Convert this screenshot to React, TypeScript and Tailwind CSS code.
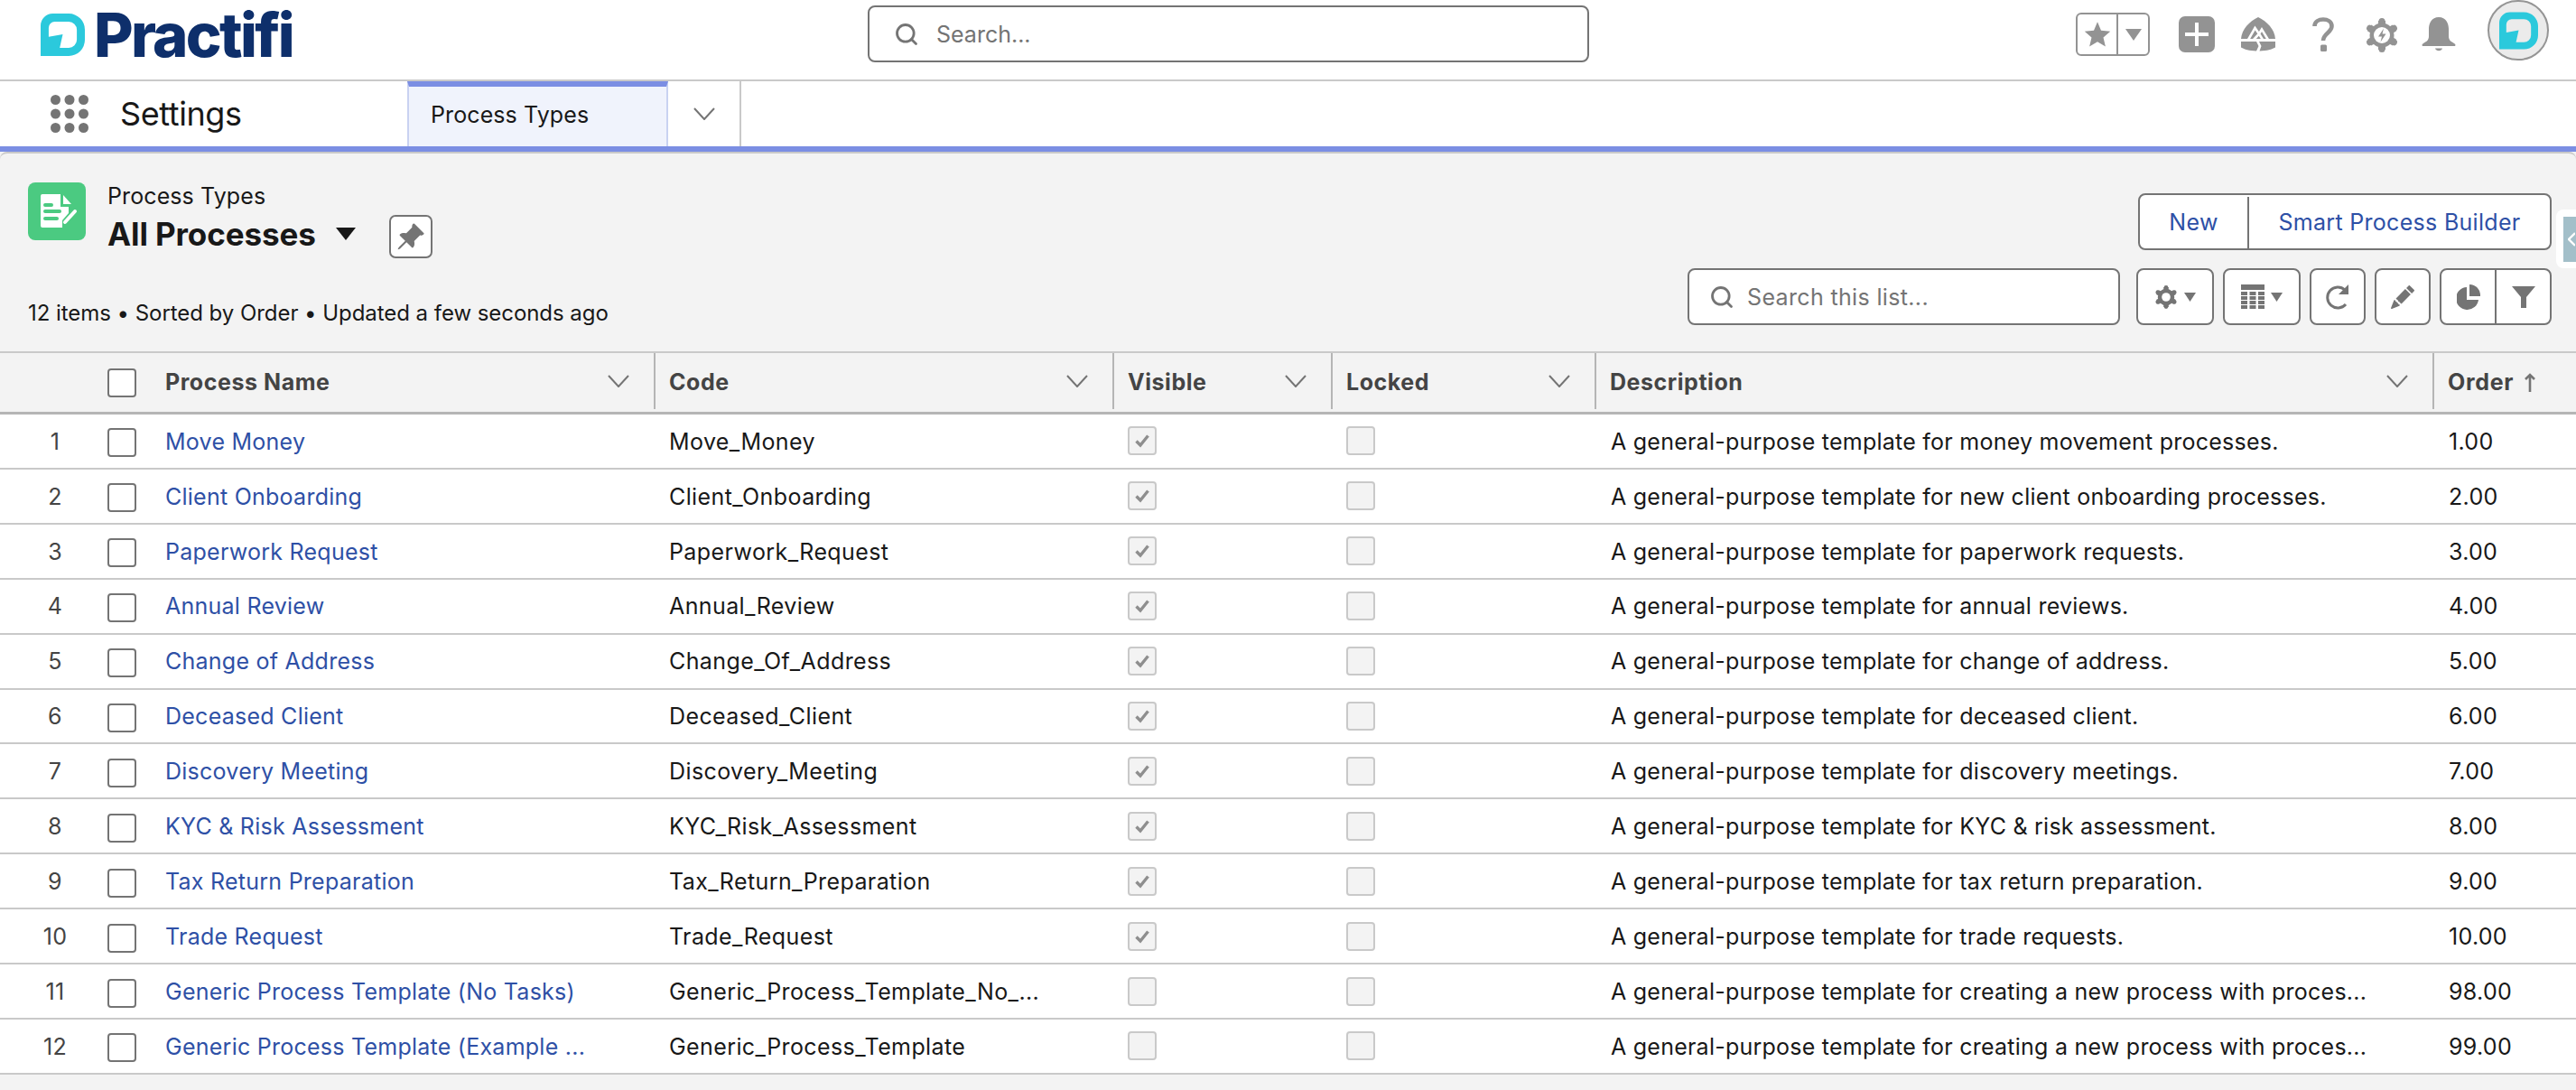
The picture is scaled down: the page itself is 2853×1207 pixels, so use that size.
import { Search } from 'lucide-react'
import { BsPinAngleFill, BsPencilFill } from 'react-icons/bs'

const rows = [
  ['Move Money', 'Move_Money', true, 'A general-purpose template for money movement processes.', '1.00'],
  ['Client Onboarding', 'Client_Onboarding', true, 'A general-purpose template for new client onboarding processes.', '2.00'],
  ['Paperwork Request', 'Paperwork_Request', true, 'A general-purpose template for paperwork requests.', '3.00'],
  ['Annual Review', 'Annual_Review', true, 'A general-purpose template for annual reviews.', '4.00'],
  ['Change of Address', 'Change_Of_Address', true, 'A general-purpose template for change of address.', '5.00'],
  ['Deceased Client', 'Deceased_Client', true, 'A general-purpose template for deceased client.', '6.00'],
  ['Discovery Meeting', 'Discovery_Meeting', true, 'A general-purpose template for discovery meetings.', '7.00'],
  ['KYC & Risk Assessment', 'KYC_Risk_Assessment', true, 'A general-purpose template for KYC & risk assessment.', '8.00'],
  ['Tax Return Preparation', 'Tax_Return_Preparation', true, 'A general-purpose template for tax return preparation.', '9.00'],
  ['Trade Request', 'Trade_Request', true, 'A general-purpose template for trade requests.', '10.00'],
  ['Generic Process Template (No Tasks)', 'Generic_Process_Template_No_...', false, 'A general-purpose template for creating a new process with proces...', '98.00'],
  ['Generic Process Template (Example ...', 'Generic_Process_Template', false, 'A general-purpose template for creating a new process with proces...', '99.00'],
] as const

const gridCols = 'grid grid-cols-[119px_64px_541px_508px_242px_292px_928px_1fr]'

function Chevron({ className = '' }: { className?: string }) {
  return (
    <svg width="24" height="14" viewBox="0 0 24 14" className={className}>
      <path d="M1 1 L12 13 L23 1" fill="none" stroke="#747474" strokeWidth="2" />
    </svg>
  )
}

function LogoMark({ size, height }: { size: number; height: number }) {
  return (
    <svg width={size} height={height} viewBox="0 0 44 42">
      <path
        fillRule="evenodd"
        fill="#2bc9dc"
        d="M0 42 V12 A12 12 0 0 1 12 0 H28 A16 16 0 0 1 44 16 V26 A16 16 0 0 1 28 42 Z M8 23 V14 A6 6 0 0 1 14 8 H28 A8 8 0 0 1 36 16 V26 A8 8 0 0 1 28 34 H19 L22 20.5 Z"
      />
    </svg>
  )
}

function Gear({ size, bolt = false, fill = '#939393' }: { size: number; bolt?: boolean; fill?: string }) {
  const lobes = [0, 60, 120, 180, 240, 300]
  return (
    <svg width={size} height={size} viewBox="0 0 38 38">
      {lobes.map((a) => (
        <circle key={a} cx="19" cy="3.5" r="3.5" fill={fill} transform={`rotate(${a + 0} 19 19)`} />
      ))}
      {lobes.map((a) => (
        <rect key={a} x="15" y="3" width="8" height="8" fill={fill} transform={`rotate(${a} 19 19)`} />
      ))}
      <circle cx="19" cy="19" r="13.5" fill={fill} />
      <circle cx="19" cy="19" r={bolt ? 9 : 7} fill="#fff" />
      {bolt && <path d="M21 11.5 L15 20.5 H19 L17.5 26.5 L23.5 17.5 H19.5 Z" fill={fill} />}
    </svg>
  )
}

function Checkbox() {
  return <div className="h-[32px] w-[32px] rounded-[4px] border-2 border-[#747474] bg-white" />
}

function ReadOnlyCheck({ checked }: { checked: boolean }) {
  return (
    <div className="flex h-[32px] w-[32px] items-center justify-center rounded-[4px] border-2 border-[#c9c9c9] bg-[#f3f3f3]">
      {checked && (
        <svg width="18" height="18" viewBox="0 0 18 18">
          <path d="M2.5 9.5 L7 14 L15.5 3.5" fill="none" stroke="#8e8e8e" strokeWidth="3.4" />
        </svg>
      )}
    </div>
  )
}

function HeaderCell({ label, first = false }: { label: string; first?: boolean }) {
  return (
    <div className={`mb-[3px] flex items-center justify-between pr-[27px] text-[25px] font-bold tracking-[0.55px] text-[#444] ${first ? '' : 'border-l-2 border-[#b5b5b5] pl-[15px]'}`}>
      <span className="pt-[3px]">{label}</span>
      <Chevron />
    </div>
  )
}

function ToolButton({ w, children }: { w: string; children: React.ReactNode }) {
  return (
    <div className={`flex h-[63px] ${w} items-center justify-center rounded-[8px] border-2 border-[#747474] bg-white`}>
      {children}
    </div>
  )
}

function SmallCaret() {
  return (
    <svg width="13" height="10" viewBox="0 0 13 10" className="ml-[7px]">
      <path d="M0 0 H13 L6.5 10 Z" fill="#747474" />
    </svg>
  )
}

export default function App() {
  return (
    <div className="h-[1207px] w-[2853px] overflow-hidden bg-[#f3f3f3] font-['Inter',sans-serif] text-[24px] text-[#181818]">
      {/* Global header */}
      <div className="flex h-[90px] items-start border-b-2 border-[#c9c9c9] bg-white">
        <div className="ml-[45px] mt-[14px] flex w-[916px] items-start">
          <LogoMark size={49} height={49} />
          <span className="ml-[10px] mt-[-8px] text-[67px] font-extrabold leading-[66px] tracking-[-2.7px] text-[#0e2f6b]">Practifi</span>
        </div>
        <div className="mt-[6px] flex h-[63px] w-[799px] items-center rounded-[8px] border-2 border-[#747474] bg-white pl-[27px]">
          <Search size={28} color="#747474" strokeWidth={2.4} />
          <span className="ml-[19px] pt-[2px] text-[25px] text-[#747474]">Search...</span>
        </div>
        <div className="ml-[539px] mt-[14px] flex h-[48px] w-[82px] rounded-[6px] border-2 border-[#939393]">
          <div className="flex w-[45px] items-center justify-center border-r-2 border-[#939393]">
            <svg width="30" height="30" viewBox="0 0 24 24">
              <path d="M12 1 L15.2 8.6 L23.4 9.3 L17.2 14.7 L19.1 22.8 L12 18.5 L4.9 22.8 L6.8 14.7 L0.6 9.3 L8.8 8.6 Z" fill="#939393" />
            </svg>
          </div>
          <div className="flex flex-1 items-center justify-center">
            <svg width="18" height="13" viewBox="0 0 18 13">
              <path d="M0 0 H18 L9 13 Z" fill="#939393" />
            </svg>
          </div>
        </div>
        <div className="ml-[32px] mt-[18px] flex h-[40px] w-[40px] items-center justify-center rounded-[7px] bg-[#939393]">
          <svg width="28" height="28" viewBox="0 0 28 28">
            <path d="M14 1 V27 M1 14 H27" stroke="#fff" strokeWidth="4" />
          </svg>
        </div>
        <svg width="38" height="38" viewBox="0 0 38 38" className="ml-[29px] mt-[19px]">
          <path d="M0 24 C1 13 9 5 19 0 C29 5 37 13 38 24 Z" fill="#939393" />
          <path d="M0 27 H17 L19.5 32 L17 37.5 C9 37 4 36 0 33.5 Z M38 27 H20 L22.5 32 L20.5 37.5 C29 37 34 36 38 33.5 Z" fill="#939393" />
          <path d="M8 25 L15.5 12 L20 18.5 L23 13.5 L30 25 M14 25 L20 18.5 L24 25" fill="none" stroke="#fff" strokeWidth="2.6" />
        </svg>
        <svg width="24" height="38" viewBox="0 0 24 38" className="ml-[41px] mt-[19px]">
          <path d="M2.5 10 C2.5 0 21.5 0 21.5 10 C21.5 17 12 18 12 26" fill="none" stroke="#939393" strokeWidth="4.6" />
          <rect x="9" y="30.5" width="7" height="7.5" rx="1.5" fill="#939393" />
        </svg>
        <div className="ml-[34px] mt-[20px]">
          <Gear size={38} bolt />
        </div>
        <svg width="38" height="38" viewBox="0 0 38 38" className="ml-[25px] mt-[19px]">
          <path d="M19 0 C27 0 30 7 30 13 V21 C30 26 33 27 36 29 C38 30 38 32 36 32 H2 C0 32 0 30 2 29 C5 27 8 26 8 21 V13 C8 7 11 0 19 0 Z" fill="#939393" />
          <path d="M15 34.5 H23 C22 38 16 38 15 34.5 Z" fill="#939393" />
        </svg>
        <div className="ml-[35px] flex h-[67px] w-[68px] shrink-0 items-center justify-center rounded-full border-2 border-[#959595] bg-[#ebebeb]">
          <LogoMark size={43} height={42} />
        </div>
      </div>

      {/* App nav */}
      <div className="flex h-[78px] border-b-[6px] border-[#7b8ee3] bg-white">
        <div className="flex w-[451px] items-center">
          <svg width="42" height="42" viewBox="0 0 42 42" className="ml-[56px]">
            {[5.5, 21, 36.5].map((cy) =>
              [5.5, 21, 36.5].map((cx) => <circle key={`${cx}-${cy}`} cx={cx} cy={cy} r="5.5" fill="#747474" />),
            )}
          </svg>
          <span className="ml-[35px] text-[36px] tracking-[-0.4px]">Settings</span>
        </div>
        <div className="flex w-[289px] items-center border-x-2 border-t-[6px] border-x-[#c9d2f1] border-t-[#7b8ee3] bg-[#f0f3fc] pl-[24px] pb-[2px] text-[25px] tracking-[0.1px]">
          Process Types
        </div>
        <div className="flex w-[81px] items-center justify-center border-r-2 border-[#c9c9c9]">
          <Chevron />
        </div>
      </div>

      {/* List header */}
      <div className="relative flex h-[223px] justify-between rounded-t-[8px] border-y-2 border-[#c9c9c9] bg-[#f3f3f3]">
        <div className="pl-[31px] pt-[32px]">
          <div className="flex items-start">
            <div className="h-[64px] w-[64px] rounded-[8px] bg-[#4bca81]">
              <svg width="64" height="64" viewBox="0 0 64 64">
                <path d="M16 13 H36 V27 H45 V34 L38 42 V50 H16 A2 2 0 0 1 14 48 V15 A2 2 0 0 1 16 13 Z" fill="#fff" />
                <path d="M39 14 L48 24 H39 Z" fill="#fff" />
                <path d="M19 25 H26 M19 32 H35 M19 40 H32" stroke="#4bca81" strokeWidth="4" strokeLinecap="round" />
                <path d="M41 44 L52 32" stroke="#fff" strokeWidth="4" strokeLinecap="round" />
              </svg>
            </div>
            <div className="ml-[24px]">
              <div className="text-[25px] leading-[30px] tracking-[0.1px]">Process Types</div>
              <div className="mt-[3px] flex items-start">
                <span className="text-[35px] font-bold leading-[48px] tracking-[-0.1px]">All Processes</span>
                <svg width="22" height="14" viewBox="0 0 22 14" className="ml-[22px] mt-[17px]">
                  <path d="M0 0 H22 L11 14 Z" fill="#181818" />
                </svg>
                <div className="ml-[37px] mt-[3px] flex h-[48px] w-[48px] items-center justify-center rounded-[7px] border-2 border-[#747474] bg-white">
                  <BsPinAngleFill size={33} color="#747474" />
                </div>
              </div>
            </div>
          </div>
          <div className="mt-[46px] leading-[30px] tracking-[-0.05px]">12 items • Sorted by Order • Updated a few seconds ago</div>
        </div>

        <div className="flex flex-col items-end pr-[27px] pt-[44px]">
          <div className="flex h-[63px] w-[458px] rounded-[8px] border-2 border-[#747474] bg-white pt-[2px] text-[25px] tracking-[0.3px] text-[#2e50a6]">
            <div className="flex w-[121px] items-center justify-center border-r-2 border-[#747474]">New</div>
            <div className="flex flex-1 items-center justify-center">Smart Process Builder</div>
          </div>
          <div className="mt-[20px] flex">
            <div className="flex h-[63px] w-[479px] items-center rounded-[8px] border-2 border-[#747474] bg-white pl-[22px]">
              <Search size={28} color="#747474" strokeWidth={2.4} />
              <span className="ml-[14px] pt-[2px] text-[25px] tracking-[0.35px] text-[#747474]">Search this list...</span>
            </div>
            <div className="ml-[18px] flex gap-[10px]">
              <ToolButton w="w-[86px]">
                <Gear size={26} fill="#747474" />
                <SmallCaret />
              </ToolButton>
              <ToolButton w="w-[86px]">
                <svg width="26" height="28" viewBox="0 0 26 28">
                  <rect width="26" height="6" fill="#747474" />
                  {[8, 13, 18, 23].map((y) =>
                    [0, 9.5, 19].map((x) => <rect key={`${x}-${y}`} x={x} y={y} width="7" height="4" fill="#747474" />),
                  )}
                </svg>
                <SmallCaret />
              </ToolButton>
              <ToolButton w="w-[62px]">
                <svg width="26" height="28" viewBox="0 0 26 28">
                  <path d="M22 22 A11.5 11.5 0 1 1 21 6" fill="none" stroke="#747474" strokeWidth="3" />
                  <path d="M25 0 V11 H14 Z" fill="#747474" />
                </svg>
              </ToolButton>
              <ToolButton w="w-[62px]">
                <BsPencilFill size={26} color="#747474" />
              </ToolButton>
              <div className="flex h-[63px] w-[124px] rounded-[8px] border-2 border-[#747474] bg-white">
                <div className="flex w-[61px] items-center justify-center border-r-2 border-[#747474]">
                  <svg width="26" height="28" viewBox="0 0 26 28">
                    <path d="M11 3 A12.5 12.5 0 1 0 24 17 H11 Z" fill="#747474" />
                    <path d="M14 0 A12 12 0 0 1 26 13 H14 Z" fill="#747474" />
                  </svg>
                </div>
                <div className="flex flex-1 items-center justify-center">
                  <svg width="26" height="24" viewBox="0 0 26 24">
                    <path d="M0 0 H26 L16 12 V24 H10 V12 Z" fill="#747474" />
                  </svg>
                </div>
              </div>
            </div>
          </div>
        </div>

        {/* Utility panel handle */}
        <div className="absolute right-0 top-[62px] flex h-[65px] w-[22px] items-center rounded-l-[8px] bg-white pl-[8px]">
          <div className="flex h-[50px] w-full items-center bg-[#a3bfc9]">
            <svg width="8" height="16" viewBox="0 0 8 16" className="ml-[5px]">
              <path d="M8 1 L1 8 L8 15" fill="none" stroke="#fff" strokeWidth="2.4" />
            </svg>
          </div>
        </div>
      </div>

      {/* Table header */}
      <div className={`${gridCols} h-[68px] border-b-[3px] border-[#b5b5b5] bg-[#f3f3f3]`}>
        <div />
        <div className="flex items-center">
          <Checkbox />
        </div>
        <HeaderCell label="Process Name" first />
        <HeaderCell label="Code" />
        <HeaderCell label="Visible" />
        <HeaderCell label="Locked" />
        <HeaderCell label="Description" />
        <div className="mb-[3px] flex items-center border-l-2 border-[#b5b5b5] pl-[15px] text-[25px] font-bold tracking-[0.7px] text-[#444]">
          <span className="pt-[3px]">Order</span>
          <svg width="16" height="22" viewBox="0 0 16 22" className="ml-[10px] mt-[3px]">
            <path d="M8 21 V2 M3 7 L8 2 L13 7" fill="none" stroke="#747474" strokeWidth="2.6" />
          </svg>
        </div>
      </div>

      {/* Rows */}
      {rows.map(([name, code, visible, desc, order], i) => (
        <div key={name} className={`${gridCols} h-[60.92px] items-center border-b-2 border-[#c9c9c9] bg-white text-[25px] tracking-[0.3px]`}>
          <div className="pl-[3px] pt-[2px] text-center text-[#444]">{i + 1}</div>
          <div className="pt-[4px]">
            <Checkbox />
          </div>
          <div className="pt-[2px] tracking-[0.25px] text-[#2e50a6]">{name}</div>
          <div className="pl-[17px] pt-[2px] tracking-[0.4px]">{code}</div>
          <div className="pl-[17px]">
            <ReadOnlyCheck checked={visible} />
          </div>
          <div className="pl-[17px]">
            <ReadOnlyCheck checked={false} />
          </div>
          <div className="pl-[18px] pt-[2px] tracking-[0.24px]">{desc}</div>
          <div className="pl-[18px] pt-[2px]">{order}</div>
        </div>
      ))}
    </div>
  )
}
